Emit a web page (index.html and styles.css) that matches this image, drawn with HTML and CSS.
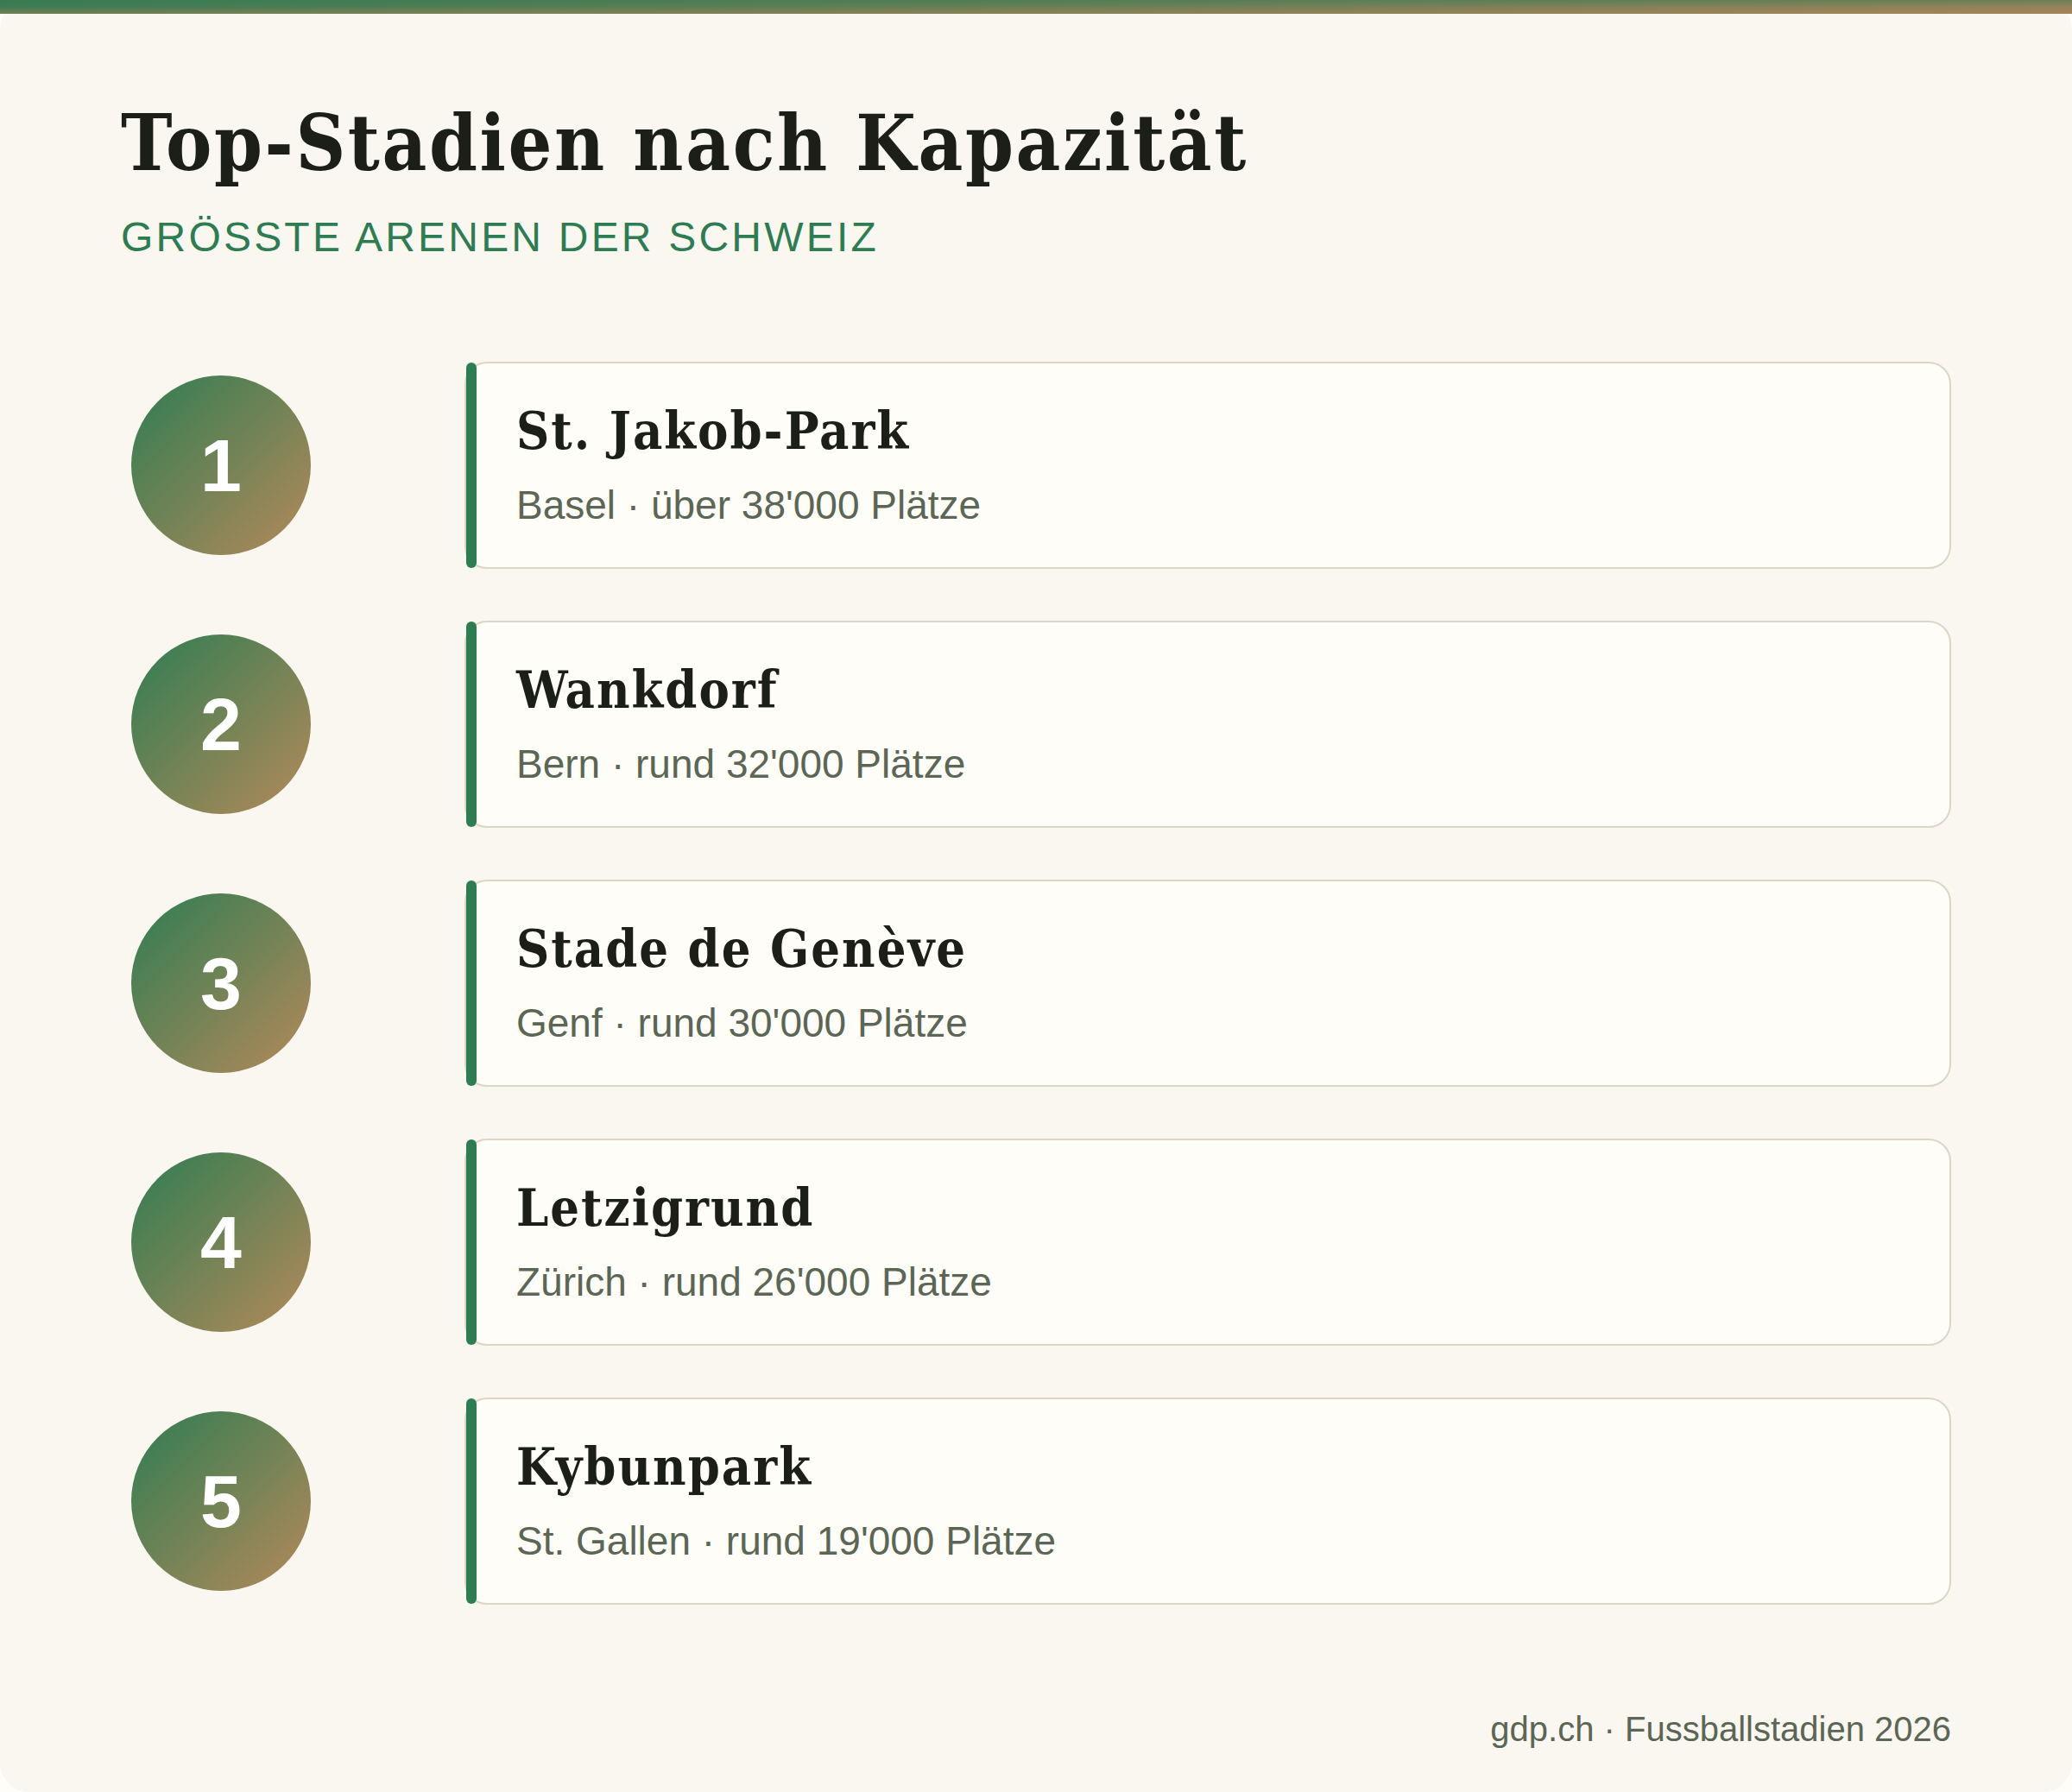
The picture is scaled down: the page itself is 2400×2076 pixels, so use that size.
FILE: index.html
```html
<!DOCTYPE html>
<html lang="de">
<head>
<meta charset="utf-8">
<title>Top-Stadien nach Kapazität</title>
<link rel="stylesheet" href="styles.css">
</head>
<body>
<main class="page">
  <header class="head">
    <h1 class="title">Top-Stadien nach Kapazität</h1>
    <p class="subtitle">GRÖSSTE ARENEN DER SCHWEIZ</p>
  </header>
  <ol class="list">
    <li class="row">
      <div class="rank">1</div>
      <div class="card">
        <h2 class="name">St. Jakob-Park</h2>
        <p class="meta">Basel · über 38'000 Plätze</p>
      </div>
    </li>
    <li class="row">
      <div class="rank">2</div>
      <div class="card">
        <h2 class="name">Wankdorf</h2>
        <p class="meta">Bern · rund 32'000 Plätze</p>
      </div>
    </li>
    <li class="row">
      <div class="rank">3</div>
      <div class="card">
        <h2 class="name">Stade de Genève</h2>
        <p class="meta">Genf · rund 30'000 Plätze</p>
      </div>
    </li>
    <li class="row">
      <div class="rank">4</div>
      <div class="card">
        <h2 class="name">Letzigrund</h2>
        <p class="meta">Zürich · rund 26'000 Plätze</p>
      </div>
    </li>
    <li class="row">
      <div class="rank">5</div>
      <div class="card">
        <h2 class="name">Kybunpark</h2>
        <p class="meta">St. Gallen · rund 19'000 Plätze</p>
      </div>
    </li>
  </ol>
  <footer class="foot">gdp.ch · Fussballstadien 2026</footer>
</main>
</body>
</html>
```

FILE: styles.css
```css
html, body {
  margin: 0;
  padding: 0;
  background: #fefdf8;
}

.page {
  position: relative;
  box-sizing: border-box;
  width: 2400px;
  height: 2076px;
  padding: 121px 140px 0 140px;
  background: #f9f7f0;
  border-radius: 34px;
  display: flex;
  flex-direction: column;
}

.page::before {
  content: "";
  position: absolute;
  top: 0;
  left: 0;
  right: 0;
  height: 16px;
  background:
    linear-gradient(180deg, rgba(46,125,82,0.45), rgba(46,125,82,0) 50%, rgba(180,134,88,0) 50%, rgba(180,134,88,0.45)),
    linear-gradient(90deg, #3f7b52, #97825a);
}

.head {
  display: flex;
  flex-direction: column;
}

.title {
  margin: 0;
  font-family: "DejaVu Serif Condensed", "DejaVu Serif", Georgia, serif;
  font-weight: 700;
  font-size: 89px;
  line-height: 1;
  letter-spacing: 2.6px;
  color: #1b1f17;
}

.subtitle {
  margin: 41px 0 0 0;
  font-family: "Liberation Sans", Arial, sans-serif;
  font-size: 48px;
  line-height: 1;
  letter-spacing: 3.2px;
  color: #2e7d52;
}

.list {
  list-style: none;
  margin: 120px 0 0 0;
  padding: 0;
  display: flex;
  flex-direction: column;
  gap: 60px;
}

.row {
  display: grid;
  grid-template-columns: 232px 1fr;
  column-gap: 166px;
  align-items: center;
}

.rank {
  justify-self: center;
  width: 208px;
  height: 208px;
  border-radius: 50%;
  background: linear-gradient(135deg, #2e7d52 0%, #b5895a 100%);
  color: #ffffff;
  font-family: "Liberation Sans", Arial, sans-serif;
  font-weight: 700;
  font-size: 86px;
  display: flex;
  align-items: center;
  justify-content: center;
}

.card {
  position: relative;
  box-sizing: border-box;
  height: 240px;
  padding: 49px 48px 0 58px;
  background: #fefdf8;
  border: 2px solid #ddd5c6;
  border-radius: 26px;
}

.card::before {
  content: "";
  position: absolute;
  left: 0;
  top: -1px;
  bottom: -1px;
  width: 12px;
  border-radius: 6px;
  background: #2e7d52;
}

.name {
  margin: 0;
  font-family: "DejaVu Serif Condensed", "DejaVu Serif", Georgia, serif;
  font-weight: 700;
  font-size: 59px;
  line-height: 1;
  letter-spacing: 2px;
  color: #1b1f17;
}

.meta {
  margin: 33px 0 0 0;
  font-family: "Liberation Sans", Arial, sans-serif;
  font-size: 46px;
  line-height: 1;
  color: #5b6655;
}

.foot {
  margin-top: 124px;
  text-align: right;
  font-family: "Liberation Sans", Arial, sans-serif;
  font-size: 40px;
  line-height: 1;
  color: #5b6655;
}
```
